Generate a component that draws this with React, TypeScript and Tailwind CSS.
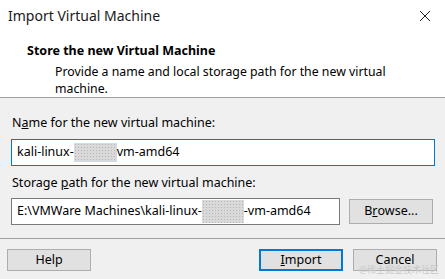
import React from "react";

const font = { fontFamily: '"Noto Sans", "Noto Sans CJK SC", sans-serif' };

function Blur({ w, h }: { w: number; h: number }) {
  return (
    <span
      className="inline-block bg-[#d9d9d9] align-middle"
      style={{
        width: w,
        height: h,
        backgroundImage: "radial-gradient(#b5b5b5 0.6px, transparent 0.9px)",
        backgroundSize: "3px 3px",
      }}
    />
  );
}

export default function App() {
  return (
    <div className="relative w-[445px] h-[279px] overflow-hidden bg-[#f0f0f0] text-black text-[12px] leading-none" style={font}>
      <div className="bg-white h-[98px] border-b border-[#a0a0a0] flex flex-col">
        <div className="flex items-center justify-between h-[32px] pl-[8px] pr-[11px]">
          <span className="text-[14px] text-[#1a1a1a]">Import Virtual Machine</span>
          <svg width="12" height="12" viewBox="0 0 12 12" className="mr-[3px]">
            <path d="M1 1L11 11M11 1L1 11" stroke="#222" strokeWidth="1" fill="none" />
          </svg>
        </div>
        <div className="pl-[27px] pt-[13px] font-bold text-[12.5px]">Store the new Virtual Machine</div>
        <div className="pl-[55px] pt-[6px] text-[12.3px] leading-[17px]">
          Provide a name and local storage path for the new virtual
          <br />
          machine.
        </div>
      </div>
      <div className="px-[11px] pt-[19px]">
        <div className="pl-[1px] text-[12.5px]">
          N<span className="underline">a</span>me for the new virtual machine:
        </div>
        <div className="mt-[9px] h-[27px] w-[424px] border border-[#0078d7] bg-white flex items-center pl-[5px] text-[12.5px]">
          <span>kali-linux-</span>
          <Blur w={43} h={19} />
          <span>vm-amd64</span>
        </div>
        <div className="mt-[11px] pl-[1px] text-[12.5px]">
          Storage <span className="underline">p</span>ath for the new virtual machine:
        </div>
        <div className="mt-[9px] flex items-center gap-[9px]">
          <div className="h-[27px] w-[329px] border border-[#7a7a7a] bg-white flex items-center pl-[5px] text-[12.5px]">
            <span>E:\VMWare Machines\kali-linux-</span>
            <Blur w={42} h={23} />
            <span>-vm-amd64</span>
          </div>
          <div className="h-[25px] w-[84px] border border-[#adadad] bg-[#e1e1e1] flex items-center justify-center text-[12.5px]">
            B<span className="underline">r</span>owse...
          </div>
        </div>
      </div>
      <div className="mt-[13px] border-t border-[#a0a0a0]" />
      <div className="flex items-center pt-[10px] pl-[7px] pr-[8px]">
        <div className="h-[22px] w-[84px] border border-[#adadad] bg-[#e1e1e1] flex items-center justify-center text-[12.5px]">Help</div>
        <div className="flex-1" />
        <div className="h-[22px] w-[84px] border-2 border-[#0078d7] bg-[#e1e1e1] flex items-center justify-center text-[12.5px]">
          <span className="underline">I</span>mport
        </div>
        <div className="h-[22px] w-[84px] ml-[10px] border border-[#adadad] bg-[#e1e1e1] flex items-center justify-center text-[12.5px]">Cancel</div>
      </div>
      <div className="absolute right-[6px] bottom-[5px] text-[9px] text-[#c8c8c8]">@稀土掘金技术社区</div>
    </div>
  );
}
